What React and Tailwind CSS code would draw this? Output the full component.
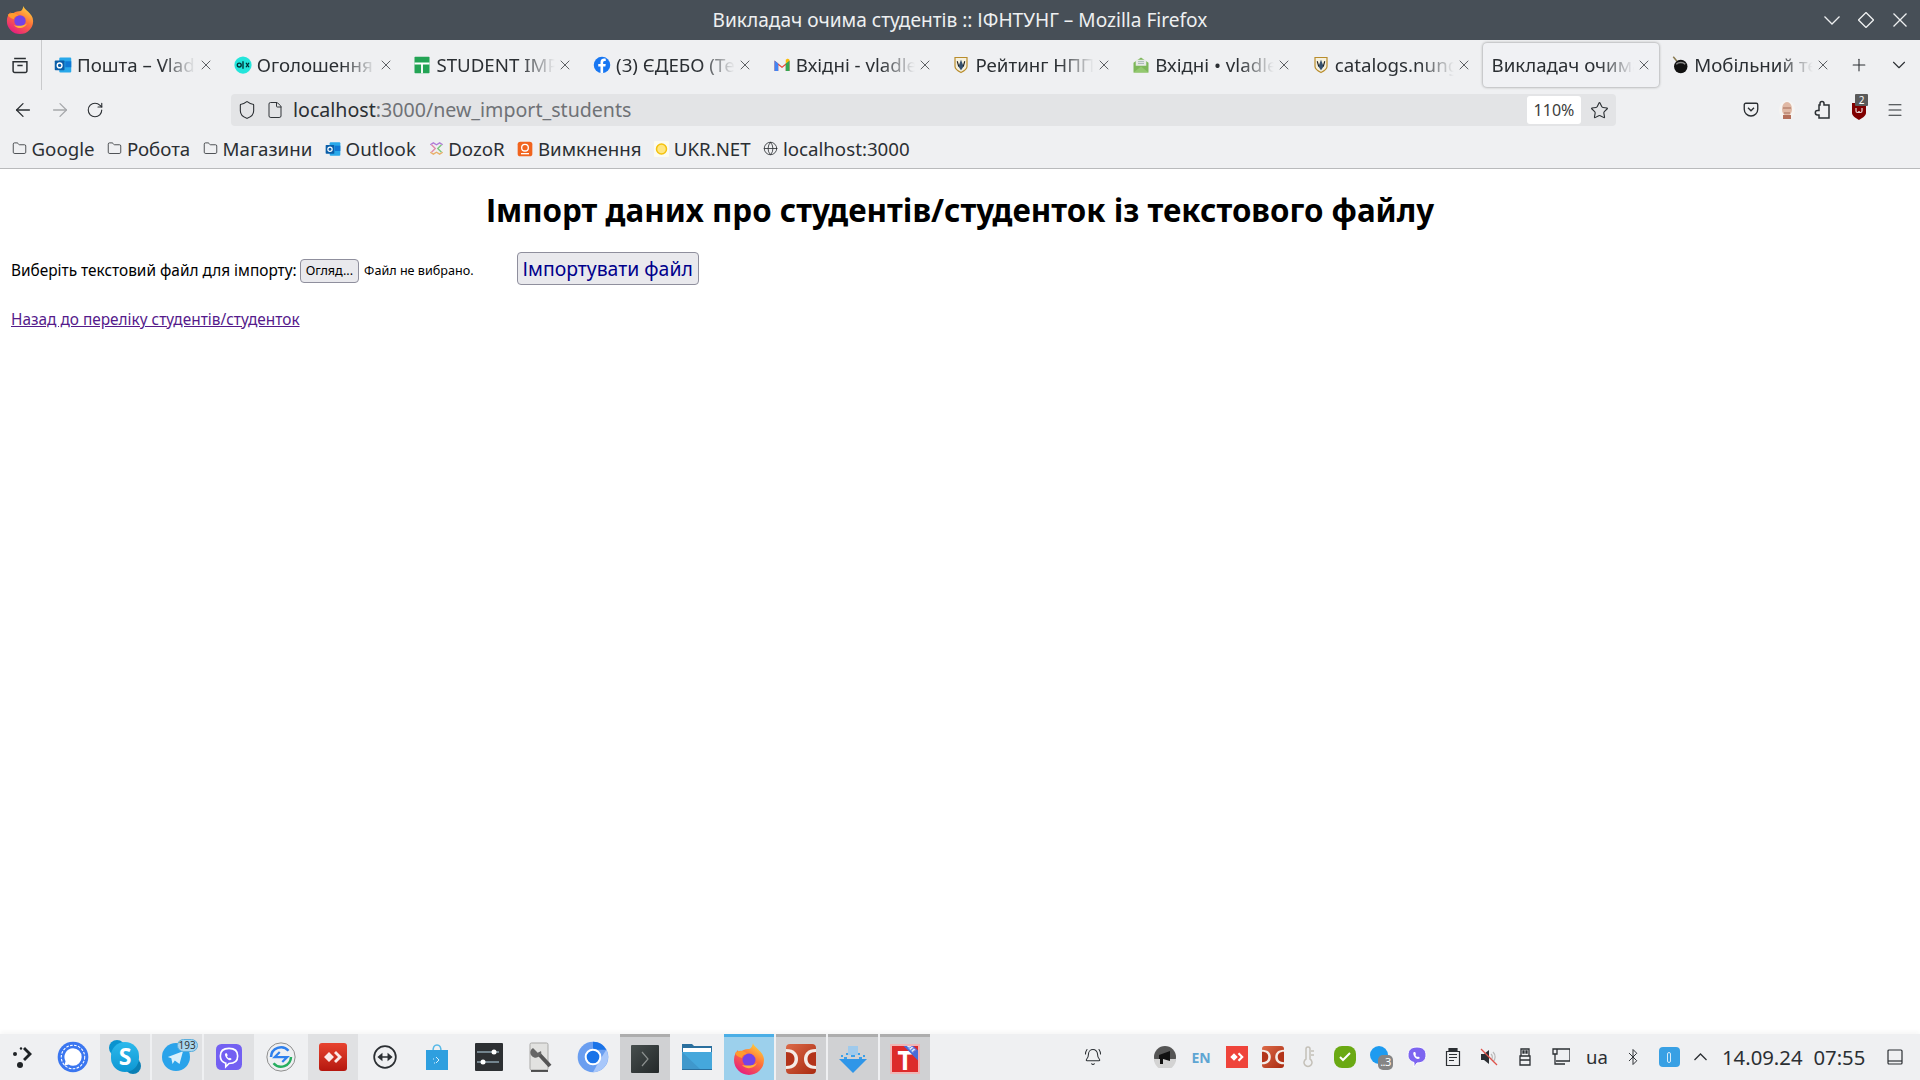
import { ArrowLeft, ArrowRight, RotateCw, Shield, File, Star, Menu, Plus, ChevronDown, X, Folder, Globe, Bluetooth, BellRing } from 'lucide-react';

const Svg = ({ size = 18, children }) => (
  <svg width={size} height={size} viewBox="0 0 24 24" className="shrink-0">{children}</svg>
);

const Outlook = ({ size = 18 }) => (
  <Svg size={size}>
    <rect x="7" y="2" width="16" height="20" rx="1.5" fill="#28a8ea" />
    <rect x="15" y="7" width="8" height="8" fill="#0f78d4" />
    <rect x="1" y="6" width="13" height="13" rx="1" fill="#0a5ea8" />
    <circle cx="7.5" cy="12.5" r="3.2" fill="none" stroke="#fff" strokeWidth="1.8" />
  </Svg>
);
const Olx = () => (
  <Svg>
    <circle cx="12" cy="12" r="11.500" fill="#23e5db" />
    <circle cx="7" cy="12" r="2.600" fill="none" stroke="#002f34" strokeWidth="1.800" />
    <path d="M12 7v10M16 9l4 6M20 9l-4 6" stroke="#002f34" strokeWidth="1.800" />
  </Svg>
);
const Sheets = () => (
  <Svg>
    <rect x="2" y="1" width="20" height="22" rx="1" fill="#23a455" />
    <path d="M2 10h20M12 10v13" stroke="#fff" strokeWidth="2.500" />
  </Svg>
);
const Facebook = () => (
  <Svg>
    <circle cx="12" cy="12" r="11" fill="#1877f2" />
    <path d="M13.500 23v-9h3l.5-3.500h-3.500V8.500c0-1 .5-2 2-2H17V3.500c-3.500-.8-7 .3-7 4.500v2.500H7V14h3v9z" fill="#fff" />
  </Svg>
);
const Gmail = () => (
  <Svg>
    <path d="M2 20V6l10 8 10-8v14h-5v-8l-5 4-5-4v8z" fill="#ea4335" />
    <path d="M2 6v14h5v-10z" fill="#4285f4" />
    <path d="M22 6v14h-5v-10z" fill="#34a853" />
    <path d="M17 10l5-4c0-2-2-3-3.500-2L17 5z" fill="#fbbc04" />
  </Svg>
);
const Crest = () => (
  <Svg>
    <path d="M4 2h16v12c0 4-4 6-8 8-4-2-8-4-8-8z" fill="#f4f0df" stroke="#b98d2c" strokeWidth="1.600" />
    <path d="M12 5l3.500 9-3.500 5-3.500-5z" fill="#36516e" />
    <path d="M7 7l2 7M17 7l-2 7" stroke="#222" strokeWidth="1.500" />
  </Svg>
);
const Mail = () => (
  <Svg>
    <path d="M2 9l10-7 10 7v13H2z" fill="#7eb75a" />
    <rect x="5" y="5" width="14" height="8" fill="#e6e9e6" />
    <path d="M8 7.500h8M8 10h8" stroke="#9aa" strokeWidth="1" />
    <path d="M2 22l10-8 10 8z" fill="#93c86f" />
  </Svg>
);
const Bomb = () => (
  <Svg>
    <path d="M3 1l5 6" stroke="#8a7a50" strokeWidth="2" />
    <circle cx="13" cy="14" r="9" fill="#111" />
    <path d="M7 11c3-3 9-3 12 0" stroke="#888" strokeWidth="2" fill="none" />
  </Svg>
);

const Fade = ({ children }) => (
  <span className="min-w-0 flex-1 overflow-hidden whitespace-nowrap [mask-image:linear-gradient(to_right,black_calc(100%-34px),transparent_100%)]">
    {children}
  </span>
);

const tabs = [
  { icon: <Outlook />, title: 'Пошта – Vladlen' },
  { icon: <Olx />, title: 'Оголошення на OLX' },
  { icon: <Sheets />, title: 'STUDENT IMPORT' },
  { icon: <Facebook />, title: '(3) ЄДЕБО (Технічна' },
  { icon: <Gmail />, title: 'Вхідні - vladlen' },
  { icon: <Crest />, title: 'Рейтинг НПП ІФНТУНГ' },
  { icon: <Mail />, title: 'Вхідні • vladlen' },
  { icon: <Crest />, title: 'catalogs.nung.edu.ua' },
  { title: 'Викладач очима студентів', active: true },
  { icon: <Bomb />, title: 'Мобільний телефон' },
];

function TabStrip() {
  return (
    <div className="flex h-[50px] shrink-0 items-center bg-[#eff0f2] text-[18.7px] text-[#2b2f33]">
      <div className="flex h-full w-[42px] shrink-0 items-center justify-center border-r border-[#c9cacc] pr-[2px]">
        <svg width="16" height="17" viewBox="0 0 15 16" fill="none" stroke="#2b2f33" strokeWidth="1.400">
          <path d="M2 1.500h11M1 4.500h13v8.500a1.500 1.500 0 0 1-1.500 1.500h-10A1.500 1.500 0 0 1 1 13zM5 8h5" />
        </svg>
      </div>
      <div className="ml-[3px] flex h-full min-w-0 flex-1 items-center gap-[3.7px]">
        {tabs.map((tab) => (
          <div
            key={tab.title}
            className={`flex h-[44px] w-[176px] shrink-0 items-center gap-[5px] rounded-[4px] pl-[9px] pr-[7px] ${tab.active ? 'bg-[#f0f1f4] shadow-[0_0_3px_rgba(0,0,0,0.45)]' : ''}`}
          >
            {tab.icon}
            <Fade>{tab.title}</Fade>
            <X size={16} strokeWidth={1.300} className="-ml-[3px] shrink-0 text-[#45494d]" />
          </div>
        ))}
        <Plus size={20} strokeWidth={1.300} className="ml-[7px] shrink-0 text-[#2b2f33]" />
        <ChevronDown size={22} strokeWidth={1.200} className="ml-[15px] shrink-0 text-[#2b2f33]" />
      </div>
    </div>
  );
}

function NavBar() {
  return (
    <div className="flex h-[40px] shrink-0 items-center bg-[#eff0f2] pl-[12px] pr-[16px]">
      <ArrowLeft size={22} strokeWidth={1.400} className="shrink-0 text-[#2b2f33]" />
      <ArrowRight size={22} strokeWidth={1.400} className="ml-[15px] shrink-0 text-[#a6a8ab]" />
      <RotateCw size={18} strokeWidth={1.500} className="ml-[15px] shrink-0 text-[#2b2f33]" />
      <div className="ml-[127px] flex h-[32px] w-[1385px] shrink-0 items-center rounded-[4px] bg-[#e3e4e6] pl-[6px] text-[19.6px]">
        <Shield size={20} strokeWidth={1.300} className="shrink-0 text-[#2b2f33]" />
        <File size={18} strokeWidth={1.300} className="ml-[9px] shrink-0 text-[#2b2f33]" />
        <span className="ml-[9px] text-[#2b2f33]">localhost</span>
        <span className="text-[#6f7276]">:3000/new_import_students</span>
        <span className="ml-auto flex h-[28px] w-[54px] items-center justify-center rounded-[3px] bg-white text-[16px] text-[#3d3d3d]">110%</span>
        <Star size={19} strokeWidth={1.400} className="ml-[9px] mr-[7px] shrink-0 text-[#2b2f33]" />
      </div>
      <div className="ml-auto flex items-center gap-[18px] text-[#2b2f33]">
        <svg width="18" height="18" viewBox="0 0 24 24" fill="none" stroke="#2b2f33" strokeWidth="1.800">
          <path d="M3 5a2 2 0 0 1 2-2h14a2 2 0 0 1 2 2v6a9 9 0 0 1-18 0zM8 9l4 4 4-4" />
        </svg>
        <svg width="18" height="20" viewBox="0 0 18 20">
          <ellipse cx="9" cy="10" rx="8" ry="9.500" fill="#f6f4f2" />
          <ellipse cx="9" cy="9" rx="5" ry="7" fill="#e0b8a4" />
          <path d="M5 8h8M6 13h6" stroke="#a56c58" strokeWidth="1.200" />
          <path d="M5 15h8v4H5z" fill="#b56f5a" />
        </svg>
        <svg width="18" height="20" viewBox="0 0 18 20" fill="none" stroke="#2b2f33" strokeWidth="1.500">
          <path d="M6 5V3.500a2 2 0 0 1 4 0V5h5v13H5v-3H3.500a2.200 2.200 0 0 1 0-4.400H5V5z" />
        </svg>
        <div className="relative h-[18px] w-[18px]">
          <svg width="18" height="20" viewBox="0 0 18 20">
            <path d="M2 2h14v10c0 3-4 5-7 7-3-2-7-4-7-7z" fill="#800000" />
            <path d="M6 7v3c0 2 3 2 3 0 0 2 3 2 3 0V7" fill="none" stroke="#e8d6d6" strokeWidth="1.200" />
          </svg>
          <span className="absolute left-[5px] top-[-7px] flex h-[12px] w-[13px] items-center justify-center rounded-[1px] bg-[#5a5a5a] text-[10px] leading-none text-white">2</span>
        </div>
        <Menu size={18} strokeWidth={1.400} />
      </div>
    </div>
  );
}

const DozorIcon = () => (
  <svg width="15" height="15" viewBox="0 0 24 24" fill="none" strokeWidth="2.200">
    <path d="M2 6l5-3 5 3 5-3 5 3" stroke="#b07cd8" />
    <path d="M4 6l6 6-6 6" stroke="#e08aa8" />
    <path d="M20 6l-6 6 6 6" stroke="#7cc77c" />
    <path d="M2 18l5 3 5-3 5 3 5-3" stroke="#e8b06a" />
  </svg>
);
const VymkIcon = () => (
  <Svg size={16}>
    <rect x="1" y="1" width="22" height="22" rx="4" fill="#f1641e" />
    <circle cx="12" cy="10" r="5" fill="none" stroke="#fff" strokeWidth="2" />
    <path d="M6 19h12" stroke="#fff" strokeWidth="2" />
  </Svg>
);
const UkrIcon = () => (
  <svg width="15" height="16" viewBox="0 0 15 16" className="shrink-0">
    <rect width="15" height="16" rx="1" fill="#fbfbf2" />
    <circle cx="7.500" cy="8" r="5" fill="#ffe680" stroke="#f4c20d" strokeWidth="1.500" />
  </svg>
);

const bookmarks = [
  { icon: <Folder size={15} strokeWidth={1.300} />, label: 'Google' },
  { icon: <Folder size={15} strokeWidth={1.300} />, label: 'Робота' },
  { icon: <Folder size={15} strokeWidth={1.300} />, label: 'Магазини' },
  { icon: <Outlook size={16} />, label: 'Outlook' },
  { icon: <DozorIcon />, label: 'DozoR' },
  { icon: <VymkIcon />, label: 'Вимкнення' },
  { icon: <UkrIcon />, label: 'UKR.NET' },
  { icon: <Globe size={15} strokeWidth={1.300} />, label: 'localhost:3000' },
];

function Bookmarks() {
  return (
    <div className="flex h-[39px] shrink-0 items-center gap-[12.8px] border-b border-[#b9babc] bg-[#eff0f2] pl-[12px] text-[18.7px] text-[#2b2f33]">
      {bookmarks.map((b) => (
        <div key={b.label} className="flex items-center gap-[4.5px]">
          {b.icon}
          <span>{b.label}</span>
        </div>
      ))}
    </div>
  );
}

const Signal = () => (
  <Svg size={32}>
    <circle cx="12" cy="12" r="11.500" fill="#3a76f0" />
    <circle cx="12" cy="12" r="8.800" fill="none" stroke="#fff" strokeWidth="0.800" strokeDasharray="2 1" />
    <path d="M12 5.500a6.500 6.500 0 0 1 0 13c-1.200 0-2.300-.3-3.200-.9L5.500 18.500l.9-3.300A6.500 6.500 0 0 1 12 5.500z" fill="#fff" />
  </Svg>
);
const Skype = () => (
  <div className="relative h-[34px] w-[32px]">
    <div className="absolute left-0 top-0 h-[16px] w-[16px] rounded-full bg-[#0a93cf]" />
    <div className="absolute bottom-0 right-0 h-[16px] w-[16px] rounded-full bg-[#0a7fb5]" />
    <div className="absolute inset-[2px] rounded-full bg-gradient-to-b from-[#2cb9ec] to-[#0b97d3] text-center text-[23px] font-bold leading-[29px] text-white">S</div>
  </div>
);
const Telegram = () => (
  <div className="relative -ml-[3px]">
    <Svg size={28}>
      <circle cx="12" cy="12" r="12" fill="#2aa3ea" />
      <path d="M5 12l13-5-3 11-4-3-2 3-1-5z" fill="#d9effb" />
    </Svg>
    <span className="absolute left-[15px] top-[-4px] rounded-[8px] border border-[#5aaedd] bg-[#a9d6ef] px-[1px] text-[10px] leading-[11px] text-[#333]">193</span>
  </div>
);
const Viber = ({ size = 26 }) => (
  <svg width={size} height={size} viewBox="0 0 24 24">
    <rect width="24" height="24" rx="5" fill="#7360f2" />
    <path d="M12 4c5 0 8 2.500 8 7 0 5-3 7-8 7l-3 3v-3.300C6 16.800 4 15 4 11c0-4.500 3-7 8-7z" fill="none" stroke="#fff" strokeWidth="1.500" />
    <path d="M9 8.500c-1 .5-1 1.500 0 3.500 1 1.800 2.500 3 3.800 3 1 0 1.700-.8 1.500-1.300l-1.500-1-.8.5c-.8-.4-1.500-1.200-1.800-2l.6-.8-.8-1.800z" fill="#fff" />
  </svg>
);
const Rdp = () => (
  <svg width="30" height="30" viewBox="0 0 24 24" fill="none">
    <circle cx="12" cy="12" r="11.300" stroke="#8d8d8d" strokeWidth="0.800" />
    <path d="M4 12a8 8 0 0 1 14-5" stroke="#2f80ed" strokeWidth="2" />
    <path d="M20 12a8 8 0 0 1-14 5" stroke="#27ae60" strokeWidth="2" />
    <path d="M11 8l-4 4h5M13 16l4-4h-5" stroke="#2f80ed" strokeWidth="1.800" />
  </svg>
);
const AnyDesk = () => (
  <div className="flex h-[28px] w-[28px] items-center justify-center rounded-[3px] bg-gradient-to-b from-[#e8432f] to-[#b5160e]">
    <svg width="20" height="16" viewBox="0 0 20 16"><path d="M6 3l5 5-5 5-5-5zM13 2l6 6-6 6-2-2 4-4-4-4z" fill="#fbeae8" /></svg>
  </div>
);
const TeamViewer = () => (
  <svg width="26" height="26" viewBox="0 0 24 24" fill="none">
    <circle cx="12" cy="12" r="10" stroke="#2b2f33" strokeWidth="1.600" />
    <path d="M6 12h12M6 12l3-2.500v5zM18 12l-3-2.500v5z" stroke="#2b2f33" strokeWidth="1.300" fill="#2b2f33" />
  </svg>
);
const Store = () => (
  <svg width="24" height="28" viewBox="0 0 24 28">
    <path d="M8 8c0-8 8-8 8 0" fill="none" stroke="#56b9e8" strokeWidth="1.500" />
    <path d="M1 7h22v20H1z" fill="#2e9fdf" />
    <path d="M11 14l3 3-3 3M8 16h1M9 20h1" stroke="#d7effb" fill="none" />
  </svg>
);
const Settings = () => (
  <svg width="28" height="28" viewBox="0 0 28 28">
    <rect width="28" height="28" rx="1" fill="#2d3033" />
    <path d="M2 9h22M2 19h22" stroke="#8aa0ad" strokeWidth="1.500" />
    <circle cx="19" cy="9" r="2.500" fill="#fff" />
    <circle cx="8" cy="19" r="2.500" fill="#fff" />
  </svg>
);
const Wrench = () => (
  <svg width="24" height="30" viewBox="0 0 24 30">
    <rect x="1" y="1" width="18" height="27" rx="1.500" fill="#e2e2e0" stroke="#a9a9a7" />
    <path d="M9 11l12 13" stroke="#555" strokeWidth="4" />
    <path d="M4 6a5 5 0 0 0 5 9 5 5 0 0 0 3-6l-3 2-3-3z" fill="#666" />
    <path d="M2 29h17" stroke="#222" strokeWidth="1.500" />
  </svg>
);
const Chromium = () => (
  <Svg size={32}>
    <circle cx="12" cy="12" r="11.500" fill="#6a9ef0" />
    <path d="M12 .5a11.500 11.500 0 0 1 10 6H12z" fill="#1a73e8" />
    <path d="M22 6.500a11.500 11.500 0 0 1-10 17l5-9z" fill="#a8c7fa" />
    <circle cx="12" cy="12" r="5.500" fill="#1a73e8" stroke="#fff" strokeWidth="1.500" />
  </Svg>
);
const Term = () => (
  <div className="flex h-[28px] w-[28px] items-center justify-center rounded-[1px] bg-gradient-to-br from-[#474f4e] to-[#24292a]">
    <svg width="10" height="18" viewBox="0 0 10 18" fill="none" stroke="#8b908f" strokeWidth="1.200"><path d="M2 2l6 7-6 7" /></svg>
  </div>
);
const Files = () => (
  <svg width="30" height="28" viewBox="0 0 30 28">
    <path d="M0 1h10l2 2h18v24H0z" fill="#2a6f9e" />
    <rect x="1" y="5" width="28" height="4" fill="#fff" />
    <path d="M0 9h30v17H0z" fill="#45a8dc" />
    <path d="M0 26v-17l18 17z" fill="#3f98cc" />
  </svg>
);
const FirefoxIcon = ({ size = 32 }) => (
  <svg width={size} height={size} viewBox="0 0 32 32">
    <defs>
      <linearGradient id={`ff${size}`} x1="0.800" y1="0" x2="0.200" y2="1">
        <stop offset="0" stopColor="#ffdc3c" />
        <stop offset="0.450" stopColor="#ff7139" />
        <stop offset="1" stopColor="#e31587" />
      </linearGradient>
    </defs>
    <path d="M20 0c0 4 11 8 11 17a15 15 0 0 1-30 0C1 12 3 9 5 7c0 2 1 3 2 3 2-3 5-4 8-4 3 0 4-2 5-6z" fill={`url(#ff${size})`} />
    <circle cx="16" cy="17" r="6.500" fill="#7542e5" />
    <path d="M2 10c4-3 9-3 12 1-3 0-5 2-5 4-3-1-6-2-7-5z" fill="#ff9b2e" />
    <path d="M9 22a9 9 0 0 0 15-2c-4 3-10 3-15 2z" fill="#ffb03a" />
  </svg>
);
const DoubleC = ({ size = 30 }) => (
  <svg width={size} height={size} viewBox="0 0 30 30">
    <defs>
      <linearGradient id={`dc${size}`} x1="0" y1="0" x2="1" y2="1">
        <stop offset="0" stopColor="#dc6a48" />
        <stop offset="1" stopColor="#a92a10" />
      </linearGradient>
    </defs>
    <rect width="30" height="30" rx="4" fill={`url(#dc${size})`} />
    <path d="M0 5c9 0 12 5 12 10s-3 10-12 10" fill="#f4ece7" />
    <path d="M0 8c6 0 8.500 3 8.500 7S6 22 0 22" fill="#b3341a" />
    <path d="M30 5c-9 0-12 5-12 10s3 10 12 10" fill="#f4ece7" />
    <path d="M30 8c-6 0-8.500 3-8.500 7s2.500 7 8.500 7" fill="#b3341a" />
  </svg>
);
const Download = () => (
  <svg width="28" height="28" viewBox="0 0 28 28">
    <path d="M9 1h10v9H9z" fill="#9fcaec" />
    <path d="M0 14h28L14 28z" fill="#2f96e8" />
    <path d="M2 11h2M7 9h2M19 9h2M24 11h2M5 13h3M12 11h4M20 13h3" stroke="#3aa0ea" strokeWidth="2" />
  </svg>
);
const TFree = () => (
  <div className="relative h-[30px] w-[30px] overflow-hidden border-[2px] border-[#f0b5b5] bg-[#dd2a2a] text-center text-[26px] font-bold leading-[28px] text-white">
    T
    <span className="absolute right-[-8px] top-[-2px] w-[32px] rotate-45 bg-[#4a6bd8] text-[5px] font-bold leading-[7px]">FREE</span>
  </div>
);

const activeSlot = 'bg-[#d0d1d3] border-t-[3px] border-[#adadad]';

const launcher = [
  { key: 'menu', w: 'w-[46px]', icon: (
    <svg width="24" height="24" viewBox="0 0 24 24" fill="#1f2326"><path d="M14 2l7 7-7 7-2-2 5-5-5-5z" /><circle cx="4" cy="9" r="2" /><circle cx="10" cy="3.500" r="1.200" /><circle cx="9" cy="20" r="3" /></svg>
  ) },
  { key: 'signal', icon: <Signal /> },
  { key: 'skype', bg: 'bg-[#e0e1e3]', icon: <Skype /> },
  { key: 'tg', bg: 'bg-[#e0e1e3]', icon: <Telegram /> },
  { key: 'viber', bg: 'bg-[#e0e1e3]', icon: <Viber /> },
  { key: 'rdp', icon: <Rdp /> },
  { key: 'any', bg: 'bg-[#e0e1e3]', icon: <AnyDesk /> },
  { key: 'tv', icon: <TeamViewer /> },
  { key: 'store', icon: <Store /> },
  { key: 'settings', icon: <Settings /> },
  { key: 'wrench', icon: <Wrench /> },
  { key: 'chromium', icon: <Chromium /> },
  { key: 'term', bg: activeSlot, icon: <Term /> },
  { key: 'files', icon: <Files /> },
  { key: 'ff', bg: 'bg-[#9cd0ec] border-t-[3px] border-[#4aaee6]', icon: <FirefoxIcon /> },
  { key: 'dc', bg: activeSlot, icon: <DoubleC /> },
  { key: 'dl', bg: activeSlot, icon: <Download /> },
  { key: 'tfree', bg: activeSlot, icon: <TFree /> },
];

// tray slots are a fixed 36px, second one is empty in the screenshot
const tray = [
  { key: 'bell', icon: <BellRing size={18} strokeWidth={1.400} className="text-[#2b2f33]" /> },
  { key: 'gap' },
  { key: 'horn', icon: (
    <svg width="22" height="22" viewBox="0 0 22 22"><circle cx="11" cy="11" r="11" fill="#555" /><path d="M0 13a11 11 0 0 0 22 0z" fill="#d3d3d3" /><path d="M5 9l11-4v10L9 13v5H6v-5H5z" fill="#111" /></svg>
  ) },
  { key: 'en', icon: <span className="text-[14px] font-bold text-[#5ea5d3]">EN</span> },
  { key: 'any', icon: (
    <div className="flex h-[22px] w-[22px] items-center justify-center bg-[#ef443b]"><svg width="16" height="12" viewBox="0 0 20 16"><path d="M6 3l5 5-5 5-5-5zM13 2l6 6-6 6-2-2 4-4-4-4z" fill="#fff" /></svg></div>
  ) },
  { key: 'dc', icon: <DoubleC size={22} /> },
  { key: 'thermo', icon: (
    <svg width="12" height="22" viewBox="0 0 12 22" fill="none" stroke="#c4c0b8" strokeWidth="1.500"><path d="M3 3a2 2 0 0 1 4 0v10a4 4 0 1 1-4 0zM8 5h3M8 9h3" /></svg>
  ) },
  { key: 'ok', icon: (
    <div className="flex h-[22px] w-[22px] items-center justify-center rounded-[8px] bg-[#6aa913]"><svg width="12" height="10" viewBox="0 0 12 10" fill="none" stroke="#fff" strokeWidth="2"><path d="M1 5l3 3 7-7" /></svg></div>
  ) },
  { key: 'tg', icon: (
    <div className="relative h-[22px] w-[22px]"><div className="h-[18px] w-[18px] rounded-full bg-[#1d9bf0]" /><span className="absolute bottom-[-2px] right-[-1px] flex h-[15px] w-[15px] items-center justify-center rounded-[5px] bg-[#858585] text-[11px] tracking-tighter text-white">..3</span></div>
  ) },
  { key: 'viber', icon: (
    <svg width="20" height="22" viewBox="0 0 20 22"><path d="M10 1c6 0 9 3 9 8 0 5-3 8-9 8l-3 4v-4.500C3 15 1 13 1 9c0-5 3-8 9-8z" fill="#7d65f0" stroke="#fff" /><path d="M7 6c-1 .5-1 2 0 4 1 1.800 2.500 3 4 3 1.200 0 2-1 1.700-1.500l-1.700-1-.8.5c-.8-.4-1.500-1.200-1.800-2l.6-.8-.8-2.200z" fill="#fff" /></svg>
  ) },
  { key: 'clip', icon: (
    <svg width="16" height="18" viewBox="0 0 16 18" fill="none" stroke="#2b2f33" strokeWidth="1.200"><path d="M1.500 3.500h13v14h-13zM4 6.500h8M4 9.500h8M4 12.500h5" /><path d="M4 .5h8v3H4z" fill="#2b2f33" /></svg>
  ) },
  { key: 'mute', icon: (
    <svg width="18" height="18" viewBox="0 0 18 18" fill="none"><path d="M1 6h3l5-4v14l-5-4H1z" fill="#2b2f33" /><path d="M11 6a4 4 0 0 1 0 6M13 4a7 7 0 0 1 0 10" stroke="#b8b8b8" strokeWidth="1.200" /><path d="M1 1l16 16" stroke="#e0524a" strokeWidth="1.200" /></svg>
  ) },
  { key: 'usb', icon: (
    <svg width="12" height="18" viewBox="0 0 12 18" fill="none" stroke="#2b2f33" strokeWidth="1.300"><path d="M2 1h8v7H2zM1 8h10v9H1zM1 12h10" /><path d="M4 3h1v2H4zM7 3h1v2H7z" fill="#2b2f33" /></svg>
  ) },
  { key: 'net', icon: (
    <svg width="18" height="18" viewBox="0 0 18 18" fill="none" stroke="#2b2f33" strokeWidth="1.300"><path d="M4 1h14v12H4M1 1h4v5H1zM3 6v10h10M7 16h6" /></svg>
  ) },
  { key: 'ua', icon: <span className="text-[18.500px] text-[#2b2f33]">ua</span> },
  { key: 'bt', icon: <Bluetooth size={18} strokeWidth={1.300} className="text-[#2b2f33]" /> },
  { key: 'wifi', icon: (
    <div className="flex h-[20px] w-[21px] items-center justify-center rounded-[4px] bg-[#38a0e4]"><div className="h-[11px] w-[4px] rounded-full border border-[#d7ecfa]" /></div>
  ) },
];

function Taskbar() {
  return (
    <div className="flex h-[46px] shrink-0 items-stretch bg-[#eff0f2] shadow-[0_-3px_4px_rgba(0,0,0,0.03)]">
      <div className="flex items-stretch gap-[2px]">
        {launcher.map((item) => (
          <div key={item.key} className={`flex ${item.w || 'w-[50px]'} items-center justify-center ${item.bg || ''}`}>
            {item.icon}
          </div>
        ))}
      </div>
      <div className="ml-[145px] flex items-center">
        {tray.map((item) => (
          <div key={item.key} className="flex w-[36px] items-center justify-center">{item.icon}</div>
        ))}
        <svg width="13" height="8" viewBox="0 0 13 8" fill="none" stroke="#2b2f33" strokeWidth="1.300" className="ml-[7px]">
          <path d="M.5 7l6-6 6 6" />
        </svg>
        <span className="ml-[15px] text-[20.3px] text-[#2b2f33]">14.09.24</span>
        <span className="ml-[11px] text-[20.3px] text-[#2b2f33]">07:55</span>
        <svg width="16" height="16" viewBox="0 0 16 16" fill="none" stroke="#2b2f33" strokeWidth="1.200" className="ml-[22px]">
          <rect x="1" y="1" width="14" height="14" rx="1" />
          <path d="M1 12h14" />
        </svg>
      </div>
    </div>
  );
}

export default function App() {
  return (
    <div className="flex h-screen flex-col overflow-hidden bg-white font-['Noto_Sans',sans-serif]">
      <div className="relative flex h-[40px] shrink-0 items-center justify-center bg-[#474f57] text-[19.1px] text-[#eef0f1]">
        <div className="absolute left-[6px] top-[6px]"><FirefoxIcon size={28} /></div>
        <span>Викладач очима студентів :: ІФНТУНГ – Mozilla Firefox</span>
        <div className="absolute right-[12px] top-0 flex h-full items-center gap-[18px]">
          <svg width="16" height="16" viewBox="0 0 16 16" fill="none" stroke="#eef0f1" strokeWidth="1.300"><path d="M.5 4.500L8 12l7.500-7.500" /></svg>
          <svg width="16" height="16" viewBox="0 0 16 16" fill="none" stroke="#eef0f1" strokeWidth="1.300"><path d="M8 .5L15.500 8 8 15.500.5 8z" /></svg>
          <svg width="16" height="16" viewBox="0 0 16 16" fill="none" stroke="#eef0f1" strokeWidth="1.300"><path d="M1.500 1.500l13 13M14.500 1.500l-13 13" /></svg>
        </div>
      </div>
      <TabStrip />
      <NavBar />
      <Bookmarks />

      <main className="min-h-0 flex-1 px-[11px] text-black">
        <h1 className="mt-[19px] text-center text-[31.3px] font-bold leading-[44px]">
          Імпорт даних про студентів/студенток із текстового файлу
        </h1>
        <div className="mt-[20px] flex items-center">
          <div className="mt-[4px] flex items-center text-[15.4px]">
            <span>Виберіть текстовий файл для імпорту:</span>
            <span className="ml-[3px] rounded-[4px] border border-[#8f8f9d] bg-[#e9e9ed] px-[5px] text-[12.600px] leading-[22px]">Огляд...</span>
            <span className="ml-[5px] mt-[2px] text-[12.600px]">Файл не вибрано.</span>
          </div>
          <button className="ml-[43px] h-[33px] rounded-[4px] border border-[#8f8f9d] bg-[#e9e9ed] px-[5px] text-[19.4px] text-[#00008b]">Імпортувати файл</button>
        </div>
        <a href="#" className="mt-[23px] inline-block text-[15.4px] text-[#551a8b] underline">Назад до переліку студентів/студенток</a>
      </main>

      <Taskbar />
    </div>
  );
}
